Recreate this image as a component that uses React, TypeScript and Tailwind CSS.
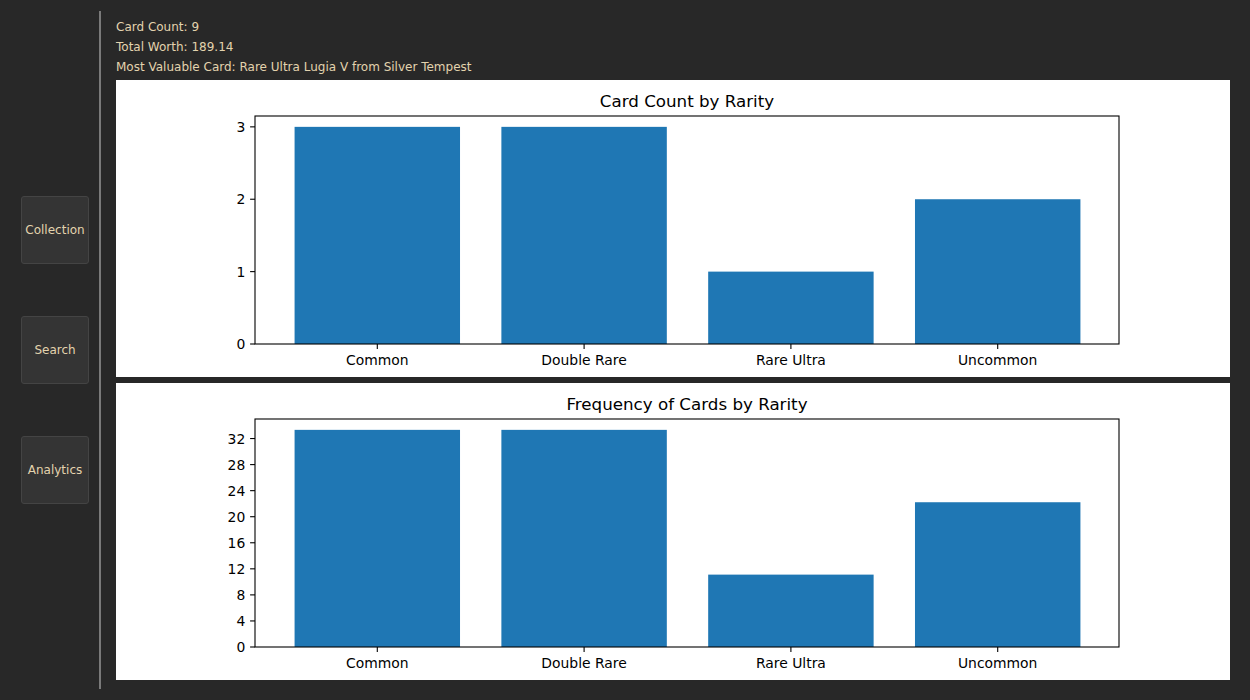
import React from "react";

type Bar = { label: string; value: number };

const rarities = ["Common", "Double Rare", "Rare Ultra", "Uncommon"];

const countData: Bar[] = [
  { label: "Common", value: 3 },
  { label: "Double Rare", value: 3 },
  { label: "Rare Ultra", value: 1 },
  { label: "Uncommon", value: 2 },
];

const freqData: Bar[] = [
  { label: "Common", value: 33.333 },
  { label: "Double Rare", value: 33.333 },
  { label: "Rare Ultra", value: 11.111 },
  { label: "Uncommon", value: 22.222 },
];

// axes box inside the white figure panel
const AX = { left: 139, right: 1003, top: 36, bottom: 264 };

function BarChart({
  title,
  data,
  yMax,
  ticks,
}: {
  title: string;
  data: Bar[];
  yMax: number;
  ticks: number[];
}) {
  const unit = 206.8;
  const xOf = (i: number) => 261.3 + i * unit;
  const yOf = (v: number) => AX.bottom - (v / yMax) * (AX.bottom - AX.top);
  const font = "'DejaVu Sans', 'Liberation Sans', sans-serif";

  return (
    <svg width="1114" height="297" viewBox="0 0 1114 297" className="block">
      <rect x="0" y="0" width="1114" height="297" fill="#ffffff" />
      <text
        x={(AX.left + AX.right) / 2}
        y="27"
        textAnchor="middle"
        fontFamily={font}
        fontSize="16.7"
        fill="#000"
      >
        {title}
      </text>
      {data.map((d, i) => (
        <rect
          key={d.label}
          x={xOf(i) - 0.4 * unit}
          y={yOf(d.value)}
          width={0.8 * unit}
          height={AX.bottom - yOf(d.value)}
          fill="#1f77b4"
        />
      ))}
      <rect
        x={AX.left}
        y={AX.top}
        width={AX.right - AX.left}
        height={AX.bottom - AX.top}
        fill="none"
        stroke="#000"
        strokeWidth="1.1"
      />
      {ticks.map((t) => (
        <g key={t}>
          <line
            x1={AX.left - 4.9}
            x2={AX.left}
            y1={yOf(t)}
            y2={yOf(t)}
            stroke="#000"
            strokeWidth="1.1"
          />
          <text
            x={AX.left - 9.7}
            y={yOf(t) + 5}
            textAnchor="end"
            fontFamily={font}
            fontSize="13.9"
            fill="#000"
          >
            {t}
          </text>
        </g>
      ))}
      {rarities.map((r, i) => (
        <g key={r}>
          <line
            x1={xOf(i)}
            x2={xOf(i)}
            y1={AX.bottom}
            y2={AX.bottom + 4.9}
            stroke="#000"
            strokeWidth="1.1"
          />
          <text
            x={xOf(i)}
            y="285"
            textAnchor="middle"
            fontFamily={font}
            fontSize="13.9"
            fill="#000"
          >
            {r}
          </text>
        </g>
      ))}
    </svg>
  );
}

function NavButton({ label }: { label: string }) {
  return (
    <button className="w-[68px] h-[68px] rounded-[3px] border border-[#444444] bg-[#343434] text-[12px] text-[#e3d3ae] font-['DejaVu_Sans',sans-serif]">
      {label}
    </button>
  );
}

export default function App() {
  return (
    <div className="w-[1250px] h-[700px] bg-[#282828] flex font-['DejaVu_Sans',sans-serif]">
      <div className="w-[101px] my-[11px] pl-[21px] border-r-2 border-[#7a7a7a] flex flex-col justify-center gap-[52px]">
        <NavButton label="Collection" />
        <NavButton label="Search" />
        <NavButton label="Analytics" />
      </div>
      <div className="flex flex-col pl-[15px] pt-[17px]">
        <div className="text-[12px] leading-[20px] text-[#e3d3ae] mb-[3px]">
          <p>Card Count: 9</p>
          <p>Total Worth: 189.14</p>
          <p>Most Valuable Card: Rare Ultra Lugia V from Silver Tempest</p>
        </div>
        <div className="flex flex-col gap-[6px]">
          <BarChart
            title="Card Count by Rarity"
            data={countData}
            yMax={3.15}
            ticks={[0, 1, 2, 3]}
          />
          <BarChart
            title="Frequency of Cards by Rarity"
            data={freqData}
            yMax={35}
            ticks={[0, 4, 8, 12, 16, 20, 24, 28, 32]}
          />
        </div>
      </div>
    </div>
  );
}
